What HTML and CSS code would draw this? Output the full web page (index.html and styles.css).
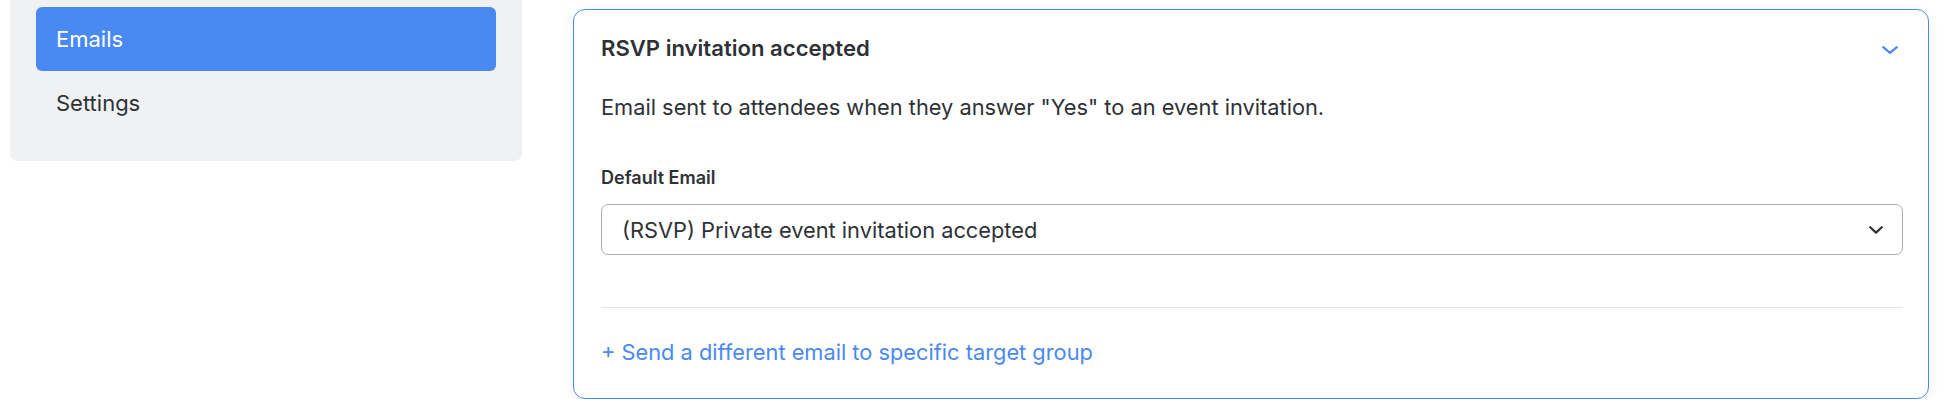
FILE: index.html
```html
<!DOCTYPE html>
<html lang="en">
<head>
<meta charset="utf-8">
<title>Emails</title>
<link rel="stylesheet" href="styles.css">
</head>
<body>
<div class="page">
  <aside class="sidebar">
    <nav class="side-panel">
      <a class="side-item active">Emails</a>
      <a class="side-item">Settings</a>
    </nav>
  </aside>
  <main class="content">
    <section class="card">
      <header class="card-head">
        <h2 class="card-title">RSVP invitation accepted</h2>
        <svg class="toggle" viewBox="0 0 16 8" width="16" height="8" aria-hidden="true"><path d="M1.2 1.2 L8 6.8 L14.8 1.2" fill="none" stroke="#4a89f3" stroke-width="2.2" stroke-linecap="round" stroke-linejoin="round"/></svg>
      </header>
      <p class="card-desc">Email sent to attendees when they answer "Yes" to an event invitation.</p>
      <div class="field">
        <label class="field-label">Default Email</label>
        <div class="select">
          <span class="select-value">(RSVP) Private event invitation accepted</span>
          <svg class="select-caret" viewBox="0 0 14 8" width="14" height="8" aria-hidden="true"><path d="M1.2 1.2 L7 6.6 L12.8 1.2" fill="none" stroke="#2f3237" stroke-width="2.2" stroke-linecap="round" stroke-linejoin="round"/></svg>
        </div>
      </div>
      <hr class="divider">
      <a class="add-link">+ Send a different email to specific target group</a>
    </section>
  </main>
</div>
</body>
</html>
```

FILE: styles.css
```css
* { box-sizing: border-box; }
html, body { margin: 0; padding: 0; background: #ffffff; }
body {
  font-family: Inter, "Noto Sans", "Liberation Sans", sans-serif;
  color: #2e3136;
  overflow: hidden;
}
.page {
  display: flex;
  align-items: flex-start;
  padding: 0 15px 0 10px;
  gap: 51px;
}
.sidebar { width: 512px; flex: none; }
.side-panel {
  margin-top: -20px;
  padding: 27px 26px 26px;
  background: #f0f1f3;
  border-radius: 8px;
  display: flex;
  flex-direction: column;
}
.side-item {
  display: flex;
  align-items: center;
  height: 64px;
  padding: 0 20px;
  font-size: 22px;
  color: #2e3136;
  border-radius: 6px;
}
.side-item.active {
  background: #4a89f3;
  color: #ffffff;
}
.content { flex: 1; padding-top: 9px; }
.card {
  border: 1px solid #4a89f3;
  border-radius: 12px;
  background: #ffffff;
  box-shadow: 0 4px 14px rgba(0,0,0,0.05);
  padding: 23px 25px 0 27px;
  height: 390px;
}
.card-head {
  display: flex;
  align-items: center;
  justify-content: space-between;
  height: 30px;
  padding-right: 5px;
}
.toggle { margin-top: 3px; }
.card-title {
  margin: 0;
  font-size: 22.1px;
  line-height: 30px;
  font-weight: 600;
  color: #2e3136;
}
.card-desc {
  margin: 29px 0 0;
  font-size: 21.8px;
  line-height: 30px;
  color: #2e3136;
}
.field { margin-top: 44px; }
.field-label {
  display: block;
  font-size: 18px;
  font-weight: 600;
  line-height: 24px;
  color: #2e3136;
}
.select {
  margin-top: 14px;
  height: 51px;
  border: 1px solid #a9adb3;
  border-radius: 7px;
  display: flex;
  align-items: center;
  justify-content: space-between;
  padding: 0 19px 0 20px;
}
.select-value { font-size: 21.8px; color: #2e3136; }
.divider {
  margin: 52px 0 0;
  border: 0;
  border-top: 1px solid #e4e5e7;
}
.add-link {
  display: block;
  margin-top: 29px;
  font-size: 21.8px;
  line-height: 30px;
  color: #4a89f3;
}
```
